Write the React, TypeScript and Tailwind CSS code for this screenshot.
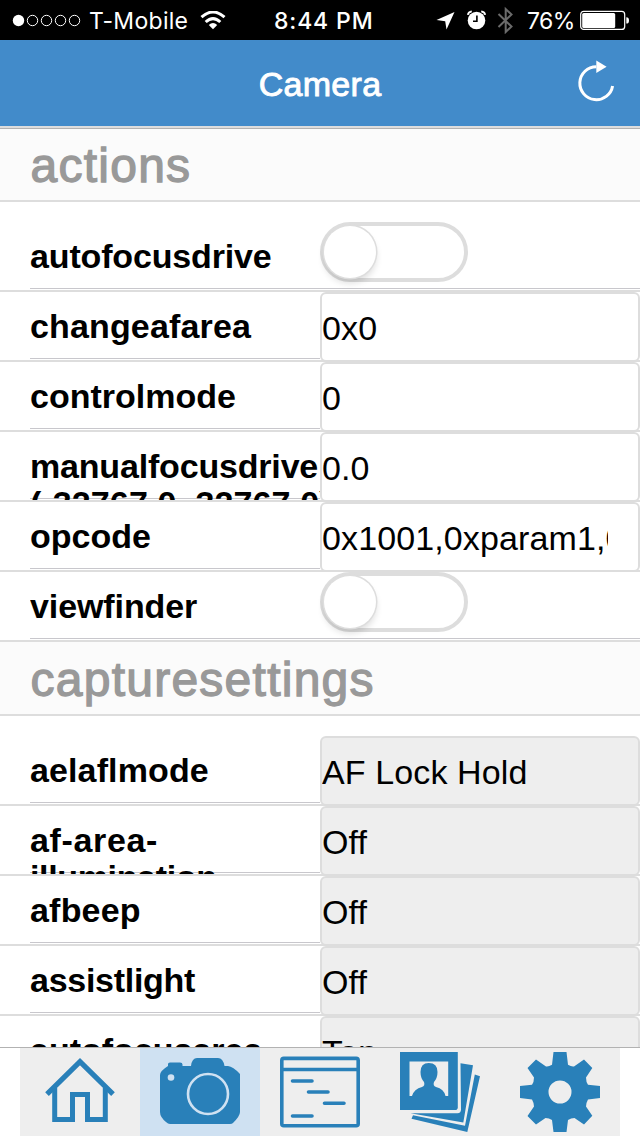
import type { ReactNode } from "react";

type Row = {
  label: ReactNode;
  kind: "toggle" | "input" | "select";
  value?: string;
  tracking?: string;
  first?: boolean;
};

const actions: Row[] = [
  { label: "autofocusdrive", kind: "toggle", first: true, tracking: "tracking-[-0.15px]" },
  { label: "changeafarea", kind: "input", value: "0x0", tracking: "tracking-[0.15px]" },
  { label: "controlmode", kind: "input", value: "0" },
  {
    label: (
      <>
        <span className="tracking-[-0.18px]">manualfocusdrive </span>
        <span className="tracking-[0.1px]">(-32767.0..32767.0)</span>
      </>
    ),
    kind: "input",
    value: "0.0",
  },
  { label: "opcode", kind: "input", value: "0x1001,0xparam1,0xparam2" },
  { label: "viewfinder", kind: "toggle", tracking: "tracking-[-0.1px]" },
];

const captureSettings: Row[] = [
  { label: "aelaflmode", kind: "select", value: "AF Lock Hold", first: true, tracking: "tracking-[0.12px]" },
  {
    label: (
      <>
        <span className="tracking-[0.65px]">af-area-</span>
        <span className="tracking-[-0.35px]">illumination</span>
      </>
    ),
    kind: "select",
    value: "Off",
  },
  { label: "afbeep", kind: "select", value: "Off", tracking: "tracking-[0.2px]" },
  { label: "assistlight", kind: "select", value: "Off", tracking: "tracking-[-0.28px]" },
  { label: "autofocusarea", kind: "select", value: "Top" },
];

function StatusBar() {
  return (
    <div className="flex h-10 shrink-0 items-center bg-black font-['Inter',sans-serif] text-[23px] leading-none text-white">
      <svg className="ml-3 h-[14px] w-[70px]" viewBox="0 0 70 14">
        <circle cx="6.5" cy="7.5" r="5.7" fill="#fff" />
        {[20.5, 34.5, 48.5, 62.5].map((cx) => (
          <circle key={cx} cx={cx} cy="7.5" r="5.2" fill="none" stroke="#fff" />
        ))}
      </svg>
      <span className="ml-[7px] w-[100px] whitespace-nowrap pt-[2px] tracking-[0.3px]">T-Mobile</span>
      <svg className="ml-[11px] h-[19px] w-[26px]" viewBox="0 0 26 19">
        <path d="M1.5 6.2Q13-4.2 24.5 6.2" fill="none" stroke="#fff" strokeWidth="3" />
        <path d="M5.7 11Q13 4.3 20.3 11" fill="none" stroke="#fff" strokeWidth="3" />
        <path d="M8.8 13.9Q13 10.2 17.2 13.9L13 18.3Z" fill="#fff" />
      </svg>
      <span className="ml-[48px] w-[104px] whitespace-nowrap pt-[2px] font-medium tracking-[0.85px]">8:44 PM</span>
      <svg className="ml-[57px] h-[20px] w-[20px]" viewBox="0 0 20 20">
        <path d="M19.5 2 11.5 19.5 10.2 11.2 1.5 10Z" fill="#fff" />
      </svg>
      <svg className="ml-[12px] h-[20px] w-[20px]" viewBox="0 0 20 20">
        <circle cx="9.5" cy="10.5" r="8.8" fill="#fff" />
        <path d="M0.8 4.8Q1.2 1.8 4.8 1.3M18.2 4.8Q17.8 1.8 14.2 1.3" fill="none" stroke="#fff" strokeWidth="1.7" />
        <path d="M9.9 5.5V11.2H6" fill="none" stroke="#000" strokeWidth="1.6" />
      </svg>
      <svg className="ml-[10px] h-[28px] w-[17px]" viewBox="0 0 17 28">
        <path d="M1.5 8 14.5 20.5 8.7 26V3L14.5 8.5 1.5 21" fill="none" stroke="#6b6b6b" strokeWidth="2" />
      </svg>
      <span className="ml-[13px] w-[48px] whitespace-nowrap pt-[2px] tracking-[-0.6px]">76%</span>
      <svg className="ml-[5px] h-[20px] w-[50px]" viewBox="0 0 50 20">
        <rect x="0.7" y="1.4" width="44" height="18" rx="3" fill="none" stroke="#fff" strokeWidth="1.2" />
        <rect x="2.2" y="2.9" width="33" height="15" rx="1.5" fill="#fff" />
        <path d="M46.3 7.2Q49 7.2 49 10.4T46.3 13.6Z" fill="#fff" />
      </svg>
    </div>
  );
}

function Header() {
  return (
    <header className="relative flex h-[88px] shrink-0 items-center justify-center border-b-2 border-[#ddd] bg-[#428bca] pt-[2px]">
      <h1 className="text-[34px] leading-none tracking-[0.3px] text-white [-webkit-text-stroke:0.9px_#fff]">Camera</h1>
      <svg className="absolute top-[20px] right-[24px] h-[44px] w-[40px]" viewBox="0 0 40 44">
        <path d="M20.3 6.7A16.5 16.5 0 1 0 36.6 26" fill="none" stroke="#fff" strokeWidth="3" />
        <path d="M20.3 0.5 30.6 6.8 20.3 13Z" fill="#fff" />
      </svg>
    </header>
  );
}

function Toggle() {
  return (
    <div className="h-[60px] w-[148px] rounded-full border-4 border-[#ddd] bg-white">
      <div className="size-[52px] rounded-full bg-white shadow-[0_0_0_1.5px_#ddd,0_5px_7px_rgba(0,0,0,0.14)]" />
    </div>
  );
}

function SettingRow({ label, kind, value, first, tracking = "tracking-normal" }: Row) {
  return (
    <div className={first ? "border-b-2 border-[#ddd] bg-white pt-5" : "border-b-2 border-[#ddd] bg-white"}>
      <div className="flex h-[68px]">
        <div className="ml-[30px] h-[68px] w-[290px] shrink-0 overflow-hidden">
          <div className="h-[67px] border-b border-[#c8c7cc] pt-[16px] text-[34px] font-bold leading-[37px] text-black">
            <div className={`-mr-5 ${tracking}`}>{label}</div>
          </div>
        </div>
        {kind === "toggle" ? (
          <div className="h-[67px] grow border-b border-[#c8c7cc]">
            <Toggle />
          </div>
        ) : (
          <div className="grow">
            <div
              className={
                kind === "input"
                  ? "h-[70px] w-[320px] rounded-[6px] border-2 border-[#ddd] bg-white pt-[15px] pr-[30px]"
                  : "h-[70px] w-[320px] rounded-[6px] border-2 border-[#ddd] bg-[#eee] pt-[15px] pr-[30px]"
              }
            >
              <div className="h-[44px] overflow-hidden whitespace-nowrap text-[34px] leading-[38px] tracking-[0.12px] text-black">
                {value}
              </div>
            </div>
          </div>
        )}
      </div>
    </div>
  );
}

function SectionTitle({ children, top }: { children: ReactNode; top?: boolean }) {
  return (
    <h2
      className={
        top
          ? "h-[74px] border-t border-b-2 border-t-[#b2b2b2] border-b-[#ddd] bg-[#fbfbfb] pt-[9px] pl-[30.5px] text-[48px] leading-[55px] tracking-[1.25px] text-[#999] [-webkit-text-stroke:1.3px_#999]"
          : "h-[74px] border-b-2 border-[#ddd] bg-[#fbfbfb] pt-[10px] pl-[30.5px] text-[48px] leading-[55px] tracking-[1.25px] text-[#999] [-webkit-text-stroke:1.3px_#999]"
      }
    >
      {children}
    </h2>
  );
}

function HomeIcon() {
  return (
    <svg className="size-20" viewBox="0 0 80 80" fill="none" stroke="#2980b9" strokeWidth="5">
      <path d="M7 42.2 40 9.6 73 42.2" strokeWidth="5.2" />
      <path d="M14.7 36V67.4H32.5V42.5H47.5V67.4H65.3V36" />
    </svg>
  );
}

function CameraIcon() {
  return (
    <svg className="size-20" viewBox="0 0 80 80">
      <path
        d="M8 14V12Q8 10.5 10 10.5H20Q22.5 10.5 22.5 12.5V14H31Q32 6 37 6H58Q63 6 64.5 14H68Q73 14.5 80 22V60Q80 64 73 71Q72 72 70 72H10Q8 72 6 70Q0 65 0 60V23Q0 19 8 14Z"
        fill="#2980b9"
      />
      <circle cx="11" cy="25.5" r="3.3" fill="#cfe1f2" />
      <circle cx="48" cy="42" r="20" fill="none" stroke="#cfe1f2" strokeWidth="2.6" />
    </svg>
  );
}

function WindowIcon() {
  return (
    <svg className="size-20" viewBox="0 0 80 80" fill="none" stroke="#2980b9" strokeWidth="3.6">
      <rect x="1.8" y="6.4" width="76.4" height="67.4" rx="2" />
      <path d="M1.6 17.5H78.4" />
      <path d="M12.5 29H32M28.5 40H48M44.5 51.3H64M12.5 64H32" strokeLinecap="round" />
    </svg>
  );
}

function PhotosIcon() {
  return (
    <svg className="size-20" viewBox="0 0 80 80" fill="#2980b9">
      <path d="M60.5 11.3 73 13.3 63.3 70.5 10.5 61.2H57.5Q61 61.2 61 57.5Z" />
      <path d="M74.8 22.5 80 24.2 67.3 80 11.5 66.8 13 63.3 65 73.8Z" />
      <path d="M0 0H57.8V55.2Q57.8 58 55 58H0Z" />
      <path
        d="M9.5 9.5H48.2V44H45.5Q44 37 36 35Q32.7 33.8 34 30Q37.5 26 37.5 20Q37.5 11 28.8 11Q20.5 11 20.5 20Q20.5 26 24 30Q25.3 33.8 22 35Q14 37 12 44H9.5Z"
        fill="#eee"
      />
    </svg>
  );
}

function GearIcon() {
  return (
    <svg className="size-20" viewBox="0 0 80 80" fill="#2980b9">
      <path
        fillRule="evenodd"
        d="M33.5 0H46.5L48 12.8Q51.5 15 54 14.5L64 7.5 72.3 16 66 25.5Q66 30 68 32.8L80 34V46L68 47.5Q66 51 66 54.5L72.3 63.7 64 72.5 54.5 66Q51 66 48 68L46.5 80H33.5L32 68Q29 66 25.5 66L16 72.5 7.5 64 14 54.5Q14 51 12 47.5L0 46V34L12 32.8Q14 30 14 25.5L7.5 16 16 7.5 26 14.5Q28.5 15 32 12.8ZM40 28.5A11.5 11.5 0 1 0 40 51.5A11.5 11.5 0 1 0 40 28.5Z"
      />
    </svg>
  );
}

function TabBar() {
  const icons = [HomeIcon, CameraIcon, WindowIcon, PhotosIcon, GearIcon];
  return (
    <nav className="flex h-[89px] shrink-0 justify-center border-t border-[#b2b2b2] bg-white">
      {icons.map((Icon, i) => (
        <div
          key={i}
          className={
            i === 1
              ? "flex h-[88px] w-[120px] items-center justify-center bg-[#cfe1f2]"
              : "flex h-[88px] w-[120px] items-center justify-center bg-[#eee]"
          }
        >
          <Icon />
        </div>
      ))}
    </nav>
  );
}

export default function App() {
  return (
    <div className="flex h-[1136px] w-[640px] flex-col overflow-hidden bg-white font-['Liberation_Sans',sans-serif]">
      <StatusBar />
      <Header />
      <main className="min-h-0 grow overflow-hidden">
        <SectionTitle top>actions</SectionTitle>
        {actions.map((row, i) => (
          <SettingRow key={i} {...row} />
        ))}
        <SectionTitle>capturesettings</SectionTitle>
        {captureSettings.map((row, i) => (
          <SettingRow key={i} {...row} />
        ))}
      </main>
      <TabBar />
    </div>
  );
}
